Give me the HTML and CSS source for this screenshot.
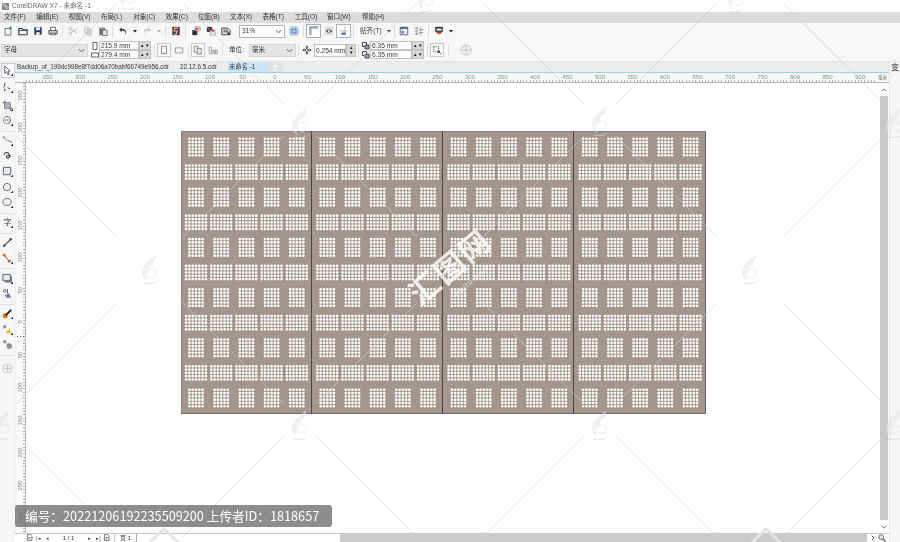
FILE: index.html
```html
<!DOCTYPE html>
<html lang="zh">
<head>
<meta charset="utf-8">
<title>CorelDRAW X7 - 未命名 -1</title>
<link rel="stylesheet" href="styles.css">
</head>
<body>
<svg class="defs" aria-hidden="true">
  <symbol id="ch" viewBox="0 0 8 8"><path d="M1 2.5 4 5.5 7 2.5" fill="none" stroke="#555" stroke-width="1.1"/></symbol>
  <symbol id="tri" viewBox="0 0 8 8"><path d="M2 3h4L4 5.5z" fill="#222"/></symbol>
  <symbol id="logo" viewBox="-16 -16 32 32">
    <path d="M6-14C1-9-8-4-8 5c0 4 3 7 6 8-3-5-2-10 2-14C4-5 7-9 6-14z" fill="#e6e6e6" fill-opacity=".55"/>
    <circle cx="2" cy="5" r="4.500" fill="none" stroke="#e6e6e6" stroke-opacity=".5" stroke-width="1.400"/>
    <path d="M-6 15c4 1 8 1 12-1" fill="none" stroke="#d8d8d8" stroke-opacity=".55" stroke-width="1.300"/>
  </symbol>
  <symbol id="page" viewBox="0 0 10 10"><path d="M2 .5h4.500L8.500 2.500v7H2z" fill="#fff" stroke="#444"/><path d="M3.500 5h3M3.500 7h3" stroke="#444"/></symbol>
  <symbol id="pickc" viewBox="0 0 12 12"><circle cx="5.500" cy="5.500" r="4" fill="#eef2f6" stroke="#667"/><path d="M9.500 12l2.500-2.500v2.500z" fill="#111"/></symbol>
</svg>

<div class="app">
  <header class="title">
    <svg class="t-logo" viewBox="0 0 10 10"><path d="M0 0h10v10H0z" fill="#8a8a8a"/><path d="M1 1l7 8M3 1l6 6" stroke="#eee"/></svg>
    <span>CorelDRAW X7 - 未命名 -1</span>
  </header>

  <nav class="menu">
    <span>文件(F)</span><span>编辑(E)</span><span>视图(V)</span><span>布局(L)</span><span>对象(C)</span><span>效果(C)</span><span>位图(B)</span><span>文本(X)</span><span>表格(T)</span><span>工具(O)</span><span class="wide">窗口(W)</span><span>帮助(H)</span>
  </nav>

  <div class="toolbar">
    <span class="ic"><svg viewBox="0 0 12 12"><path d="M2.500 3h5l2 2v6h-7z" fill="#fff" stroke="#555"/><path d="M9 .5v4M7 2.500h4" stroke="#2a9a3c" stroke-width="1.300"/></svg></span>
    <span class="ic"><svg viewBox="0 0 12 12"><path d="M1 3h4l1 1.500h5V10.500H1z" fill="#fff" stroke="#263c5a" stroke-width="1.300"/><path d="M1 5.500h10" stroke="#263c5a"/></svg></span>
    <span class="ic"><svg viewBox="0 0 12 12"><path d="M1.500 1.500h9v9h-9z" fill="#2b4468"/><path d="M3.500 1.500h5v3.500h-5z" fill="#e8eef5"/><path d="M4 7.500h4v3H4z" fill="#fff"/></svg></span>
    <span class="ic"><svg viewBox="0 0 12 12"><path d="M3 1.500h6v4H3z" fill="#fff" stroke="#555"/><path d="M1 5.500h10v4H1z" fill="#d5d5d5" stroke="#444"/><path d="M3 8.500h6v2H3z" fill="#fff" stroke="#444"/></svg></span>
    <i class="sep"></i>
    <span class="ic"><svg viewBox="0 0 12 12"><g fill="none" stroke="#b9b9b9"><circle cx="2.800" cy="3" r="1.600"/><circle cx="2.800" cy="9" r="1.600"/><path d="M4 4l7 5M4 8l7-5"/></g></svg></span>
    <span class="ic"><svg viewBox="0 0 12 12"><path d="M2 1.500h5v7H2z" fill="#e8e8e8" stroke="#c2c2c2"/><path d="M5 4h5v7H5z" fill="#d8d8d8" stroke="#bcbcbc"/></svg></span>
    <span class="ic"><svg viewBox="0 0 12 12"><path d="M1.500 2h7v9h-7z" fill="#777"/><path d="M3.500 1h3v2h-3z" fill="#ccc"/><path d="M5.500 5h5.500v6.500H5.500z" fill="#e4e4e4" stroke="#666"/></svg></span>
    <i class="sep"></i>
    <span class="ic"><svg viewBox="0 0 12 12"><path d="M4.500 1.500 1.500 4.500l3 3V5.500c3 0 4.500 1 5 5 1-4-.5-7-5-7.200z" fill="#2b3a4c"/></svg></span>
    <span class="mini"><svg viewBox="0 0 8 8"><use href="#tri"/></svg></span>
    <span class="ic"><svg viewBox="0 0 12 12"><path d="M7.500 1.500l3 3-3 3V5.500c-3 0-4.500 1-5 5-1-4 .5-7 5-7.200z" fill="#c4c4c4"/></svg></span>
    <span class="mini"><svg viewBox="0 0 8 8"><path d="M2 3h4L4 5.500z" fill="#aaa"/></svg></span>
    <i class="sep"></i>
    <span class="ic"><svg viewBox="0 0 12 12"><path d="M1.500 1h9v10h-9z" fill="#55287f"/><path d="M8.500 2.500h-4L3.500 6h4l-1 3.500h-3" fill="none" stroke="#f2d33a" stroke-width="1.300"/></svg></span>
    <i class="sep"></i>
    <span class="ic"><svg viewBox="0 0 12 12"><path d="M1.500 5h6v6h-6z" fill="#26324a"/><path d="M5 1h6v5H5z" fill="#f4f4f4" stroke="#666" stroke-width=".6"/><path d="M10 3.500H5.500M7.500 1.800 5.500 3.500l2 1.700" fill="none" stroke="#d42020" stroke-width="1.200"/></svg></span>
    <span class="ic"><svg viewBox="0 0 12 12"><path d="M1 1h6v6H1z" fill="#26324a"/><path d="M5 5h6v6H5z" fill="#eee" stroke="#777" stroke-width=".6"/><path d="M4 5.500h5M7.500 3.500l2 2-2 2" fill="none" stroke="#d42020" stroke-width="1.200"/></svg></span>
    <span class="ic"><svg viewBox="0 0 12 12"><path d="M1 2.500h7l3 3v5H1z" fill="#e8e8e8" stroke="#2a2a2a"/><path d="M3 5h5M3 7h6" stroke="#2a2a2a"/><circle cx="9" cy="9" r="1.500" fill="#333"/></svg></span>
    <div class="combo zoomc"><span>31%</span><svg viewBox="0 0 8 8"><use href="#ch"/></svg></div>
    <span class="ic"><svg viewBox="0 0 12 12"><rect x="1" y="1" width="10" height="10" rx="2" fill="#d8dde3" stroke="#aab"/><circle cx="6" cy="6" r="3.600" fill="#3b8ed0"/><path d="M6 2.500v7M2.500 6h7" stroke="#dfe8f0"/></svg></span>
    <i class="sep"></i>
    <span class="ic on"><svg viewBox="0 0 12 12"><path d="M1 1h10v2.200H3.200V11H1z" fill="#b4bcc6"/><path d="M1 1h10M1 1v10" stroke="#6a7480" fill="none"/></svg></span>
    <span class="ic"><svg viewBox="0 0 12 12"><path d="M1 1h10v10H1z" fill="#dcdcdc"/><path d="M2 6c2-2.500 6-2.500 8 0-2 2.500-6 2.500-8 0z" fill="#555"/><circle cx="6" cy="6" r="1.200" fill="#fff"/></svg></span>
    <span class="ic on"><svg viewBox="0 0 12 12"><path d="M7 1v10M1 6h10" stroke="#666" stroke-dasharray="1 1"/><path d="M3 8h5v2.500H3z" fill="#3c5f8a"/></svg></span>
    <i class="sep"></i>
    <span class="snap">贴齐(T)</span>
    <span class="mini"><svg viewBox="0 0 8 8"><use href="#tri"/></svg></span>
    <i class="sep tight"></i>
    <span class="ic"><svg viewBox="0 0 12 12"><path d="M1.500 1.500h9v9h-9z" fill="#e8edf3" stroke="#4a5c74"/><path d="M1.500 1.500h9v2h-9z" fill="#3c5f8a"/><path d="M3 6h3v3H3z" fill="#6a86a8"/></svg></span>
    <span class="ic"><svg viewBox="0 0 12 12"><path d="M3.500 1v10M8 1v10" stroke="#9aa0a6"/><path d="M1 2.500h4M1 6h4M1 9.500h4" stroke="#6aa04a"/><path d="M6 4.500h5M6 8h5" stroke="#777"/></svg></span>
    <i class="sep"></i>
    <span class="ic wide-ic"><svg viewBox="0 0 12 12"><path d="M1.500 1h9v6h-9z" fill="#2b2b2b"/><path d="M3 3h6v2.500H3z" fill="#f0f0f0"/><path d="M3 7h6v2H3z" fill="#d8261e"/><path d="M4.500 9h3L6 11z" fill="#e88a1e"/></svg></span>
    <span class="mini"><svg viewBox="0 0 8 8"><use href="#tri"/></svg></span>
  </div>

  <div class="prop">
    <div class="combo fontc"><span>字母</span><svg viewBox="0 0 8 8"><use href="#ch"/></svg></div>
    <div class="fields size">
      <div class="fline"><svg class="fi" viewBox="0 0 8 8"><path d="M2 .5h4v7H2z" fill="#fff" stroke="#667"/></svg><span class="field w38">215.9 mm</span><span class="spin"><b>▴</b><b>▾</b></span></div>
      <div class="fline"><svg class="fi" viewBox="0 0 8 8"><path d="M.5 2h7v4h-7z" fill="#fff" stroke="#667"/></svg><span class="field w38">279.4 mm</span><span class="spin"><b>▴</b><b>▾</b></span></div>
    </div>
    <i class="sep"></i>
    <span class="pbtn"><svg viewBox="0 0 12 12"><path d="M3 1.500h6v9H3z" fill="#f7f7f7" stroke="#777"/></svg></span>
    <span class="pbtn flat"><svg viewBox="0 0 12 12"><path d="M1.500 3.500h9v6h-9z" fill="#f7f7f7" stroke="#888"/></svg></span>
    <i class="sep"></i>
    <span class="pbtn"><svg viewBox="0 0 12 12"><path d="M1.500 1.500h4.500v7H1.500z" fill="#fff" stroke="#777"/><path d="M5 4h5v7H5z" fill="#e6e6e6" stroke="#777"/></svg></span>
    <span class="pbtn flat"><svg viewBox="0 0 12 12"><path d="M1.500 2.500h2.500v8H1.500z" fill="#fff" stroke="#999"/><path d="M5.500 6h2.200v4.500H5.500zM9 6h2.200v4.500H9z" fill="#eee" stroke="#999"/></svg></span>
    <i class="sep"></i>
    <span class="unit">单位:</span>
    <div class="combo unitc"><span>毫米</span><svg viewBox="0 0 8 8"><use href="#ch"/></svg></div>
    <i class="sep"></i>
    <span class="pbtn flat small"><svg viewBox="0 0 12 12"><path d="M6 .5 8 3H4zM6 11.500 4 9h4zM.5 6 3 4v4zM11.500 6 9 8V4z" fill="#333"/><circle cx="6" cy="6" r="1.800" fill="none" stroke="#333"/></svg></span>
    <span class="field nudge">0.254 mm</span>
    <span class="spin big"><b>▴</b><b>▾</b></span>
    <i class="sep"></i>
    <div class="fields dup">
      <div class="fline"><svg class="fi" viewBox="0 0 8 8"><path d="M.5.500h4v4h-4z" fill="#fff" stroke="#445"/><path d="M3 3h4v4H3z" fill="#8fa0b5" stroke="#445"/></svg><span class="field w42">6.35 mm</span><span class="spin"><b>▴</b><b>▾</b></span></div>
      <div class="fline"><svg class="fi" viewBox="0 0 8 8"><path d="M.5.500h4v4h-4z" fill="#fff" stroke="#445"/><path d="M3 3h4v4H3z" fill="#8fa0b5" stroke="#445"/></svg><span class="field w42">6.35 mm</span><span class="spin"><b>▴</b><b>▾</b></span></div>
    </div>
    <i class="sep"></i>
    <span class="pbtn"><svg viewBox="0 0 12 12"><path d="M2 2h6v6H2z" fill="none" stroke="#444" stroke-dasharray="1.500 1"/><path d="M7.500 7.500 11 11" stroke="#334"/><circle cx="8" cy="8" r="1.500" fill="#445"/></svg></span>
    <i class="sep gap"></i>
    <span class="plus"><svg viewBox="0 0 12 12"><circle cx="6" cy="6" r="5" fill="#f2f2f2" stroke="#c4c4c4"/><path d="M6 2.500v7M2.500 6h7" stroke="#c4c4c4"/></svg></span>
  </div>

  <div class="work">
    <aside class="toolbox">
      <span class="tool sel"><svg viewBox="0 0 12 12"><path d="M3 1l6 5.500-2.500.3L8 10 6.500 10.600 5 7.400 3 9z" fill="#fff" stroke="#556"/><path d="M9.500 12 12 9.500V12z" fill="#111"/></svg></span>
      <span class="tool"><svg viewBox="0 0 12 12"><path d="M3 1v4l-1.500 1M6 6l3 1.500" stroke="#445" fill="none"/><path d="M2 7l2 1.500-1 2.500z" fill="#445"/><path d="M9.500 12 12 9.500V12z" fill="#111"/></svg></span>
      <span class="tool gapt"><svg viewBox="0 0 12 12"><path d="M3 .5V9h8.500M.5 3H9v8.500" fill="none" stroke="#556"/><path d="M3 3h6v6H3z" fill="#aab3bd"/><path d="M9.500 12 12 9.500V12z" fill="#111"/></svg></span>
      <span class="tool"><svg viewBox="0 0 12 12"><use href="#pickc"/><path d="M3.500 5.500h4" stroke="#667"/></svg></span>
      <i class="tsep"></i>
      <span class="tool"><svg viewBox="0 0 12 12"><path d="M1 3c2 0 3 2 5 3s3 1 5 2" fill="none" stroke="#445" stroke-dasharray="2 1"/><circle cx="2" cy="2.500" r="1" fill="#445"/><path d="M9.500 12 12 9.500V12z" fill="#111"/></svg></span>
      <span class="tool"><svg viewBox="0 0 12 12"><path d="M2 4c2-3 5-3 6 0s-2 5-3 3 3-3 5-1" fill="none" stroke="#334" stroke-width="1.100"/></svg></span>
      <span class="tool"><svg viewBox="0 0 12 12"><path d="M1.500 1.500h8v8h-8z" fill="#e6eaef" stroke="#4a5666"/><path d="M9.500 12 12 9.500V12z" fill="#111"/></svg></span>
      <span class="tool"><svg viewBox="0 0 12 12"><use href="#pickc"/></svg></span>
      <span class="tool"><svg viewBox="0 0 12 12"><ellipse cx="5.500" cy="5.500" rx="4.500" ry="3.800" fill="#eef2f6" stroke="#667"/><path d="M9.500 12 12 9.500V12z" fill="#111"/></svg></span>
      <i class="tsep"></i>
      <span class="tool glyph">字<svg viewBox="0 0 12 12"><path d="M9.500 12 12 9.500V12z" fill="#111"/></svg></span>
      <i class="tsep"></i>
      <span class="tool"><svg viewBox="0 0 12 12"><path d="M2.500 9.500 9.500 2.500" stroke="#444" stroke-width="1.200"/><circle cx="2.500" cy="9.500" r="1.300" fill="#444"/><circle cx="9.500" cy="2.500" r="1.300" fill="#444"/></svg></span>
      <span class="tool"><svg viewBox="0 0 12 12"><path d="M2.500 2.500 8 9" stroke="#555"/><circle cx="2.500" cy="2.500" r="1.600" fill="#d9661e"/><circle cx="8" cy="9" r="1.600" fill="#d9661e"/><path d="M9.500 12 12 9.500V12z" fill="#111"/></svg></span>
      <i class="tsep"></i>
      <span class="tool"><svg viewBox="0 0 12 12"><path d="M3 3.500h8v7H3z" fill="#7a8696"/><path d="M1 1.500h8v7H1z" fill="#e8ecf2" stroke="#4a5666"/><path d="M9.500 12 12 9.500V12z" fill="#111"/></svg></span>
      <span class="tool"><svg viewBox="0 0 12 12"><path d="M6 1v5M3 9l3-3 3 3" stroke="#667" fill="none"/><circle cx="3" cy="3" r="1.500" fill="#e8ecf2" stroke="#667"/><path d="M5 8l2.500-2.500L10 10.500H4z" fill="#6a7fa8"/></svg></span>
      <i class="tsep"></i>
      <span class="tool"><svg viewBox="0 0 12 12"><path d="M1 6h5v5H1z" fill="#e4781c"/><path d="M4 8 10 2" stroke="#222" stroke-width="2"/><path d="M9.500 12 12 9.500V12z" fill="#111"/></svg></span>
      <span class="tool"><svg viewBox="0 0 12 12"><circle cx="3" cy="3" r="2" fill="#8a94a4"/><path d="M5 8l3-3 3 5H4z" fill="#efc23a"/><path d="M9.500 12 12 9.500V12z" fill="#111"/></svg></span>
      <span class="tool"><svg viewBox="0 0 12 12"><circle cx="3" cy="3" r="2" fill="#8a94a4"/><circle cx="8" cy="8" r="3" fill="#8a94a4"/><circle cx="7" cy="6" r="1.400" fill="#d9661e"/></svg></span>
      <i class="tsep"></i>
      <span class="tool lastplus"><svg viewBox="0 0 12 12"><circle cx="6" cy="6" r="5" fill="#f2f2f2" stroke="#c4c4c4"/><path d="M6 2.500v7M2.500 6h7" stroke="#c4c4c4"/></svg></span>
    </aside>

    <section class="center">
      <div class="tabs">
        <span class="tab first">Backup_of_199dc998e8f7dd06a70babf66749e956.cdr</span>
        <span class="tab second">22.12.6.5.cdr</span>
        <span class="tab active">未命名 -1</span>
        <span class="tab add">+</span>
      </div>
      <div class="hruler">
        <span class="corner"></span>
        <div class="hlabels">
          <span>350</span><span>300</span><span>250</span><span>200</span><span>150</span><span>100</span><span>50</span><span>0</span><span>50</span><span>100</span><span>150</span><span>200</span><span>250</span><span>300</span><span>350</span><span>400</span><span>450</span><span>500</span><span>550</span><span>600</span><span>650</span><span>700</span><span>750</span><span>800</span><span>850</span><span>900</span>
        </div>
        <span class="unitmark">毫米</span>
      </div>
      <div class="mid">
        <div class="vruler">
          <span>350</span><span>300</span><span>250</span><span>200</span><span>150</span><span>100</span><span>50</span><span>0</span><span>50</span><span>100</span><span>150</span><span>200</span><span>250</span><span>300</span>
          <b class="dots"></b>
        </div>
        <main class="canvas">
          <svg class="sheet" viewBox="0 0 525 283" width="525" height="283">
            <defs>
              <path id="bA" d="M-6.600-8.250h13.300M-6.600-4.950h13.300M-6.600-1.650h13.300M-6.600 1.650h13.300M-6.600 4.950h13.300M-6.600 8.250h13.300"/>
              <path id="bB" d="M-9.900-6.600h19.900M-9.900-3.300h19.900M-9.900 0h19.900M-9.900 3.300h19.900M-9.900 6.600h19.900"/>
              <g id="rA"><use href="#bA" x="15"/><use href="#bA" x="40.200"/><use href="#bA" x="65.400"/><use href="#bA" x="90.600"/><use href="#bA" x="115.800"/></g>
              <g id="rB"><use href="#bB" x="15"/><use href="#bB" x="40.200"/><use href="#bB" x="65.400"/><use href="#bB" x="90.600"/><use href="#bB" x="115.800"/></g>
              <g id="sec">
                <use href="#rA" y="16"/><use href="#rB" y="41.100"/><use href="#rA" y="66.200"/><use href="#rB" y="91.300"/><use href="#rA" y="116.400"/><use href="#rB" y="141.500"/><use href="#rA" y="166.600"/><use href="#rB" y="191.700"/><use href="#rA" y="216.800"/><use href="#rB" y="241.900"/><use href="#rA" y="267"/>
              </g>
            </defs>
            <rect width="525" height="283" fill="#a3968f"/>
            <g class="dotset">
              <use href="#sec"/><use href="#sec" x="131.250"/><use href="#sec" x="262.500"/><use href="#sec" x="393.750"/>
            </g>
            <path d="M.5 .5H524.500" stroke="#857a75"/>
            <path d="M.5 .5V282.500" stroke="#8b807b"/>
            <path d="M524.500 .5V282.500H.5" fill="none" stroke="#6d6460"/>
            <path d="M130.500 0V283M261.500 0V283M392.500 0V283" stroke="#4d4543"/>
          </svg>
        </main>
        <div class="vscroll">
          <span class="arrow"><svg viewBox="0 0 8 8"><path d="M1 5.500 4 2.500 7 5.500" fill="none" stroke="#444"/></svg></span>
          <span class="track"></span>
          <span class="arrow"><svg viewBox="0 0 8 8"><use href="#ch"/></svg></span>
        </div>
      </div>
      <footer class="status">
        <div class="pages">
          <span class="nav first-nav"><svg viewBox="0 0 10 10"><use href="#page"/></svg></span>
          <b class="tn">|◂</b><b class="tn">◂</b>
          <span class="count">1 / 1</span>
          <b class="tn">▸</b><b class="tn">▸|</b>
          <span class="nav"><svg viewBox="0 0 10 10"><use href="#page"/></svg></span>
          <span class="ptab">页 1</span>
        </div>
        <div class="hscroll"></div>
        <span class="harrow"><svg viewBox="0 0 8 8"><path d="M2.500 1 5.500 4 2.500 7" fill="none" stroke="#333" stroke-width="1.200"/></svg></span>
        <span class="mag"><svg viewBox="0 0 10 10"><circle cx="4" cy="4" r="3" fill="#dfe5ec" stroke="#556"/><path d="M6 6l3.500 3.500" stroke="#444" stroke-width="1.400"/></svg></span>
      </footer>
    </section>

    <aside class="dock"><span>变</span></aside>
  </div>

  <svg class="mark" viewBox="0 0 900 542" aria-hidden="true">
    <defs>
      <pattern id="lat" patternUnits="userSpaceOnUse" width="300" height="300">
        <path d="M183 3 284 104M16 136 117 237M117 3 16 104M284 136 183 237" fill="none" stroke="#cfcfcf" stroke-opacity=".6"/>
      </pattern>
    </defs>
    <rect width="900" height="542" fill="url(#lat)"/>
    <use href="#logo" x="284" y="106" width="32" height="32"/>
    <use href="#logo" x="584" y="104" width="32" height="32"/>
    <use href="#logo" x="878" y="106" width="32" height="32"/>
    <use href="#logo" x="-14" y="106" width="32" height="32"/>
    <use href="#logo" x="134" y="252" width="32" height="32"/>
    <use href="#logo" x="734" y="252" width="32" height="32"/>
    <use href="#logo" x="284" y="408" width="32" height="32"/>
    <use href="#logo" x="584" y="408" width="32" height="32"/>
    <use href="#logo" x="878" y="408" width="32" height="32"/>
    <use href="#logo" x="-14" y="408" width="32" height="32"/>
    <use href="#logo" x="112" y="-22" width="32" height="32"/>
    <use href="#logo" x="410" y="-20" width="32" height="32"/>
    <use href="#logo" x="720" y="-20" width="32" height="32"/>
    <path d="M150 542 164 529 178 542M752 542 766 529 780 542" fill="none" stroke="#e4e4e4" stroke-width="3"/>
    <g class="wm-big" transform="translate(452 269) rotate(-40)">
      <text x="0" y="8" text-anchor="middle">汇图网</text>
      <text class="wm-small" x="8" y="24" text-anchor="middle">huitu.com</text>
    </g>
  </svg>

  <div class="stamp">编号：20221206192235509200 上传者ID：1818657</div>
</div>
</body>
</html>
```

FILE: styles.css
```css
* { box-sizing: border-box; }
html, body { margin: 0; padding: 0; background: #fff; }
body { width: 900px; height: 542px; overflow: hidden; }
.defs { position: absolute; width: 0; height: 0; }
i { font-style: normal; }

.app {
  position: relative;
  width: 900px;
  height: 542px;
  display: flex;
  flex-direction: column;
  overflow: hidden;
  font: 6.6px/1 "Liberation Sans", "Noto Sans CJK SC", sans-serif;
  color: #333;
  background: #f7f7f7;
  filter: blur(.3px);
}

.title { height: 12px; flex: none; display: flex; align-items: center; gap: 3px; padding-left: 2px; background: #fff; color: #666; }
.t-logo { width: 7px; height: 7px; }

.menu { height: 11px; flex: none; display: flex; align-items: center; padding-left: 4px; background: #dcdcdc; color: #333; }
.menu span { width: 32.3px; flex: none; }
.menu .wide { width: 35px; }

.toolbar { height: 16px; flex: none; display: flex; align-items: center; background: #f7f7f7; }
.ic { width: 15px; height: 14px; flex: none; display: flex; align-items: center; justify-content: center; }
.ic svg { width: 10px; height: 10px; }
.ic.on { border: 1px solid #a9b0b8; background: #fff; }
.wide-ic { width: 15px; }
.mini { width: 9px; height: 9px; flex: none; display: flex; align-items: center; justify-content: center; }
.mini svg { width: 8px; height: 8px; }
.sep { width: 1px; height: 13px; margin: 0 2px; flex: none; background: #dedede; }
.sep.tight { margin: 0 1px; }
.snap { margin: 0 0 0 4px; width: 24px; flex: none; color: #333; }

.combo { display: flex; align-items: center; justify-content: space-between; flex: none; border: 1px solid #b4b4b4; background: #fff; padding: 0 2px 0 2px; }
.combo svg { width: 7px; height: 7px; }
.zoomc { width: 46px; height: 13px; margin-left: 6px; margin-right: 1px; }
.fontc { width: 87px; height: 13px; margin-left: 1px; background: #e4e4e4; border-color: #d4d4d4; }
.unitc { width: 47px; height: 13px; background: #e4e4e4; border-color: #d4d4d4; }

.prop { height: 23px; flex: none; display: flex; align-items: center; background: #f7f7f7; border-bottom: 1px solid #e4e4e4; }
.fields { display: flex; flex-direction: column; flex: none; margin-left: 3px; }
.fline { display: flex; align-items: center; height: 9px; }
.fi { width: 8px; height: 8px; flex: none; }
.field { display: block; flex: none; height: 9px; line-height: 8px; padding-left: 1px; border: 1px solid #c2c2c2; background: #fff; color: #333; white-space: nowrap; }
.w38 { width: 40px; }
.w42 { width: 42px; }
.spin { display: flex; flex: none; height: 9px; background: #d8d8d8; border: 1px solid #c2c2c2; }
.spin b { width: 5px; font-size: 5px; line-height: 7px; text-align: center; font-weight: 400; color: #111; }
.spin.big { flex-direction: column; height: 13px; width: 10px; }
.spin.big b { width: 8px; height: 5.500px; line-height: 5.500px; }
.size { margin-right: 1px; }
.dup { margin-left: 1px; margin-right: 1px; }

.pbtn { width: 14px; height: 14px; flex: none; display: flex; align-items: center; justify-content: center; border: 1px solid #c9c9c9; background: #fafafa; }
.pbtn svg { width: 10px; height: 10px; }
.pbtn.flat { border-color: transparent; background: transparent; margin-left: 1px; }
.pbtn.small { width: 12px; border: 0; margin: 0; }
.unit { width: 20px; flex: none; margin-left: 4px; }
.nudge { width: 32px; height: 13px; line-height: 11px; margin-left: 1px; }
.sep.gap { margin-right: 11px; margin-left: 4px; }
.plus { width: 12px; height: 12px; flex: none; }
.plus svg { display: block; width: 12px; height: 12px; }

.work { flex: 1; min-height: 0; display: flex; }
.toolbox { width: 15px; flex: none; display: flex; flex-direction: column; align-items: center; padding-top: 1px; background: #f6f6f6; }
.tool { width: 14px; height: 15.500px; flex: none; display: flex; align-items: center; justify-content: center; position: relative; font-size: 8px; color: #444; }
.tool svg { width: 11px; height: 11px; }
.tool.sel { height: 15px; margin-bottom: 2px; border: 1px solid #c5cbd2; background: #fff; }
.tool.glyph svg { position: absolute; left: 1px; top: 2px; }
.tool.gapt { margin-top: 2px; }
.tool.lastplus { margin-top: 4px; }
.tsep { display: block; width: 13px; height: 1px; margin: 2px 0 1.500px; flex: none; background: #e0e0e0; }

.center { flex: 1; min-width: 0; display: flex; flex-direction: column; }
.tabs { height: 11px; flex: none; display: flex; align-items: stretch; background: #ececec; border-bottom: 1px solid #8fd6f3; }
.tab { display: flex; align-items: center; flex: none; color: #333; white-space: nowrap; font-size: 6.300px; }
.tab.first { width: 163px; padding-left: 2px; }
.tab.second { width: 50px; padding-left: 2px; }
.tab.active { width: 41px; padding-left: 1px; background: #cce4f8; }
.tab.add { width: 13px; justify-content: center; background: #e2e2e2; color: #fff; font-size: 10px; }

.hruler { height: 10px; flex: none; display: flex; background: #f8f8f8; border-bottom: 1px solid #b4b4b4; position: relative; }
.corner { width: 11px; flex: none; }
.hlabels { flex: 1; min-width: 0; display: flex; padding-left: 5.250px; overflow: hidden; background: repeating-linear-gradient(to right, #b5b5b5 0 1px, transparent 1px 3.250px) 0 100% / 100% 2px no-repeat; }
.hlabels span { width: 32.500px; flex: none; text-align: center; font-size: 6px; line-height: 8px; color: #8c8c8c; }
.unitmark { width: 13px; flex: none; font-size: 4.500px; line-height: 9px; color: #666; text-align: center; background: #f8f8f8; }

.mid { flex: 1; min-height: 0; display: flex; }
.vruler { position: relative; width: 11px; flex: none; display: flex; flex-direction: column; overflow: hidden; border-left: 1px solid #f0f0f0; border-right: 1px solid #b9b9b9; background: #f8f8f8 repeating-linear-gradient(to bottom, #b5b5b5 0 1px, transparent 1px 3.250px) 100% 0 / 2px 100% no-repeat; }
.vruler span { height: 32.500px; flex: none; writing-mode: vertical-rl; transform: rotate(180deg); text-align: center; font-size: 6px; line-height: 8px; color: #8c8c8c; }
.vruler span:first-child { margin-top: -4.250px; }
.dots { position: absolute; left: 1px; top: 253px; width: 8px; height: 1px; background: repeating-linear-gradient(to right, #555 0 1px, transparent 1px 3px); }

.canvas { flex: 1; min-width: 0; background: #fff; padding: 48px 0 0 154.500px; overflow: hidden; }
.sheet { display: block; }
.dotset { fill: none; stroke: #fff; stroke-width: 2.700; stroke-linecap: round; stroke-dasharray: 0 3.300; }

.vscroll { width: 13px; flex: none; display: flex; flex-direction: column; align-items: flex-start; background: #fff; padding-left: 4px; }
.arrow { width: 8px; height: 13px; flex: none; display: flex; align-items: center; justify-content: center; }
.arrow svg { width: 6px; height: 6px; }
.track { width: 8px; flex: 1; background: #c9c9c9; }

.status { height: 9px; flex: none; display: flex; align-items: center; background: #fff; border-top: 1px solid #c8c8c8; }
.pages { width: 325px; height: 100%; flex: none; display: flex; align-items: center; padding-left: 11px; font-size: 6px; }
.nav { width: 8px; height: 8px; flex: none; display: block; }
.nav svg { display: block; width: 7px; height: 7px; }
.tn { width: 9px; flex: none; font-weight: 400; font-size: 5px; text-align: center; color: #444; }
.count { width: 33px; flex: none; text-align: center; color: #333; }
.ptab { width: 23px; margin-left: 3px; height: 100%; flex: none; display: flex; align-items: center; justify-content: center; border-right: 1px solid #aaa; border-left: 1px solid #ccc; }
.hscroll { flex: 1; height: 100%; background: #cbcbcb; }
.harrow { width: 11px; height: 8px; flex: none; display: flex; align-items: center; justify-content: center; }
.harrow svg { width: 6px; height: 6px; }
.mag { width: 8px; height: 8px; flex: none; margin-right: 3px; }
.mag svg { display: block; width: 8px; height: 8px; }

.dock { width: 11px; flex: none; background: #f6f6f6; border-left: 1px solid #e6e6e6; padding: 2px 0 0 1px; font-size: 8px; color: #333; }

.mark { position: absolute; left: 0; top: 0; width: 900px; height: 542px; pointer-events: none; }
.wm-big text { font: 700 30px "Noto Sans CJK SC", sans-serif; fill: #fff; fill-opacity: .82; letter-spacing: 2px; }
.wm-big .wm-small { font: 400 8px "Liberation Sans", sans-serif; letter-spacing: 1px; fill-opacity: .75; }

.stamp { position: absolute; left: 15px; top: 505px; width: 317px; height: 22px; padding-left: 10px; border-radius: 3px; background: rgba(105, 105, 105, .76); color: #fff; font: 12.700px/22px "Noto Sans CJK SC", sans-serif; white-space: nowrap; }
```
